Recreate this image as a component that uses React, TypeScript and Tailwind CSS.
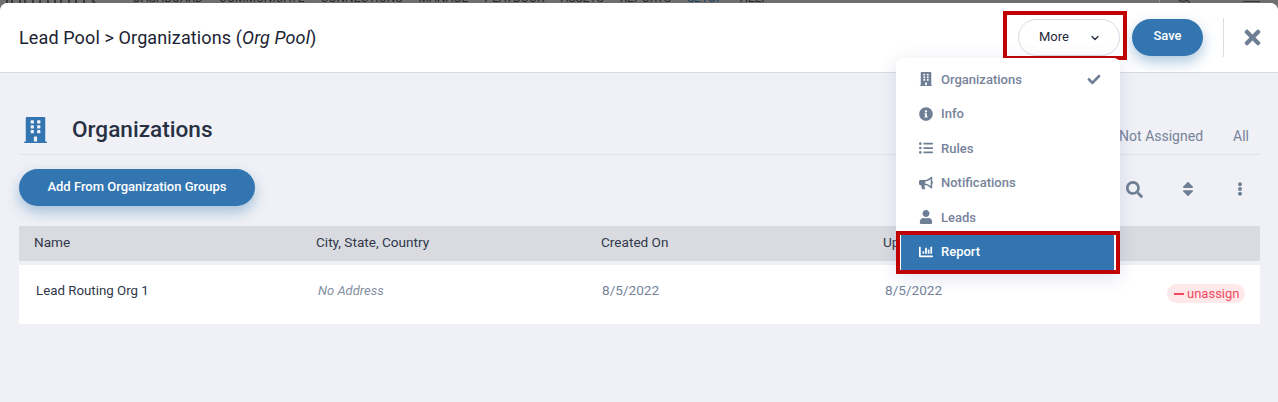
import {
  FaBuilding,
  FaInfoCircle,
  FaListUl,
  FaBullhorn,
  FaUser,
  FaChartBar,
  FaCheck,
  FaSearch,
  FaSort,
  FaEllipsisV,
  FaTimes,
} from "react-icons/fa";
import { FiChevronDown } from "react-icons/fi";

const navItems = ["DASHBOARD", "COMMUNICATE", "CONNECTIONS", "MANAGE", "PLAYBOOK", "ASSETS", "REPORTS", "SETUP", "HELP"];

const menuItems = [
  { label: "Organizations", icon: FaBuilding, checked: true },
  { label: "Info", icon: FaInfoCircle },
  { label: "Rules", icon: FaListUl },
  { label: "Notifications", icon: FaBullhorn },
  { label: "Leads", icon: FaUser },
];

const App = () => {
  return (
    <div className="relative h-[402px] w-[1278px] overflow-hidden bg-[#6f6f6f] font-['Roboto',sans-serif]">
      {/* page behind the modal, only its bottom edge shows */}
      <div className="relative flex h-[3px] gap-[16px] overflow-hidden pl-[133px] text-[12px] leading-[12px] text-[#2a2a2a]">
        <svg className="absolute left-[6px] top-0 h-[3px] w-[94px]" viewBox="0 0 94 3">
          <path d="M1 0v3M6 0v3M14 0v3M19 0v3M27 0v3M34 0v3M42 0v3M49 0v3M55 0v3M63 0v3M70 0v3M78 0v3M86 0l3 3" stroke="#3a3a3a" strokeWidth="2" fill="none" />
        </svg>
        {navItems.map((n) => (
          <span key={n} className={`-translate-y-[8px] ${n === "SETUP" ? "text-[#17415f]" : ""}`}>{n}</span>
        ))}
        <div className="absolute left-[1159px] top-0 h-[3px] w-px bg-[#8c8c8c]" />
        <svg className="absolute left-[1178px] top-0 h-[3px] w-[14px]" viewBox="0 0 14 3">
          <path d="M1 0c2 2 6 2 8 0M9 0l3 3" stroke="#3a3a3a" strokeWidth="1.5" fill="none" />
        </svg>
        <div className="absolute left-[1243px] top-[1px] h-[1px] w-[17px] bg-[#3a3a3a]" />
      </div>

      <div className="flex h-[399px] flex-col overflow-hidden rounded-t-[8px] bg-[#f0f1f6]">
        <header className="flex h-[70px] items-center border-b border-[#d9dbe2] bg-white pl-[19px] pr-[14px]">
          <h1 className="text-[18px] tracking-[0.12px] text-[#1b2333]">
            Lead Pool &gt; Organizations (<em>Org Pool</em>)
          </h1>
          <div className="ml-auto flex items-center">
            <button className="flex h-[37px] w-[102px] items-center rounded-full border border-[#d9dbe6] bg-white pb-[2px] pl-[20px] text-[13px] text-[#1f2937]">
              More
              <FiChevronDown className="ml-[20px] mt-[2px] h-[12px] w-[12px] stroke-[2.5]" />
            </button>
            <button className="ml-[12px] h-[37px] w-[71px] rounded-full bg-[#3275b0] pb-[3px] text-[13px] font-medium text-white shadow-[0_6px_14px_rgba(50,117,176,0.4)]">
              Save
            </button>
            <div className="ml-[20px] h-[39px] w-px bg-[#dcdde3]" />
            <FaTimes className="ml-[17px] h-[23px] w-[23px] text-[#6e7f95]" />
          </div>
        </header>

        <main className="flex flex-col pl-[19px] pr-[18px]">
          <div className="flex h-[82px] items-end border-b border-[#e2e4ea] pb-[8px]">
            <FaBuilding className="mb-[3px] ml-[5px] h-[26px] w-[23px] text-[#3275b0]" />
            <h2 className="ml-[25px] text-[22.6px] font-medium leading-[32px] text-[#283044]">Organizations</h2>
            <div className="ml-auto flex translate-y-[3px] gap-[30px] pb-[2px] pr-[11px] text-[14px] text-[#76839a]">
              <span>Not Assigned</span>
              <span>All</span>
            </div>
          </div>

          <div className="flex h-[71px] items-start pt-[14px]">
            <button className="h-[37px] w-[236px] rounded-full bg-[#3275b0] pb-[2px] text-[13px] font-medium text-white shadow-[0_6px_14px_rgba(50,117,176,0.4)]">
              Add From Organization Groups
            </button>
            <div className="ml-auto flex items-center pr-[13px] pt-[11px] text-[#6e7f95]">
              <FaSearch className="h-[17px] w-[17px]" />
              <FaSort className="ml-[36px] h-[18px] w-[18px]" />
              <FaEllipsisV className="ml-[36px] h-[14px] w-[14px]" />
            </div>
          </div>

          <div className="grid h-[35px] grid-cols-[282px_285px_282px_1fr] items-center bg-[#d9dbe0] pb-[2px] pl-[15px] text-[13.6px] text-[#30384a]">
            <span>Name</span>
            <span>City, State, Country</span>
            <span>Created On</span>
            <span>Updated On</span>
          </div>
          <div className="relative mt-[4px] grid h-[59px] grid-cols-[282px_284px_283px_1fr] items-center bg-white pb-[8px] pl-[17px] text-[13.3px] text-[#30384a]">
            <span>Lead Routing Org 1</span>
            <span className="text-[13px] italic text-[#868fa3]">No Address</span>
            <span className="text-[13.6px] text-[#76839a]">8/5/2022</span>
            <span className="text-[13.6px] text-[#76839a]">8/5/2022</span>
            <span className="absolute right-[15px] top-[19px] flex h-[19px] w-[78px] items-center rounded-full bg-[#ffe8ea] pl-[7px] text-[13px] text-[#f04a5e]">
              <span className="mr-[3px] h-[2px] w-[10px] bg-[#f04a5e]" />
              unassign
            </span>
          </div>
        </main>
      </div>

      {/* red highlight round the More button */}
      <div className="absolute left-[1003px] top-[11px] h-[49px] w-[124px] border-[4px] border-[#c00000]" />

      <div className="absolute left-[896px] top-[58px] w-[224px] rounded-[6px] bg-white shadow-[0_4px_18px_rgba(90,100,170,0.18)]">
        <ul className="flex flex-col pt-[4px] text-[13px] font-medium text-[#76839a]">
          {menuItems.map((m) => {
            const Icon = m.icon;
            return (
              <li key={m.label} className="flex h-[34.5px] items-center pl-[23px] pr-[19px]">
                <Icon className="h-[14px] w-[14px] text-[#6e7f95]" />
                <span className="ml-[8px]">{m.label}</span>
                {m.checked && <FaCheck className="ml-auto h-[13px] w-[14px] text-[#6e7f95]" />}
              </li>
            );
          })}
        </ul>
        <div className="-mt-[4px] h-[43px] border-[4px] border-[#c00000] bg-white">
          <div className="ml-px mr-[2px] flex h-full items-center bg-[#3275b0] pl-[18px] text-[13px] font-medium text-white">
            <FaChartBar className="h-[14px] w-[14px]" />
            <span className="ml-[8px]">Report</span>
          </div>
        </div>
      </div>
    </div>
  );
};

export default App;
